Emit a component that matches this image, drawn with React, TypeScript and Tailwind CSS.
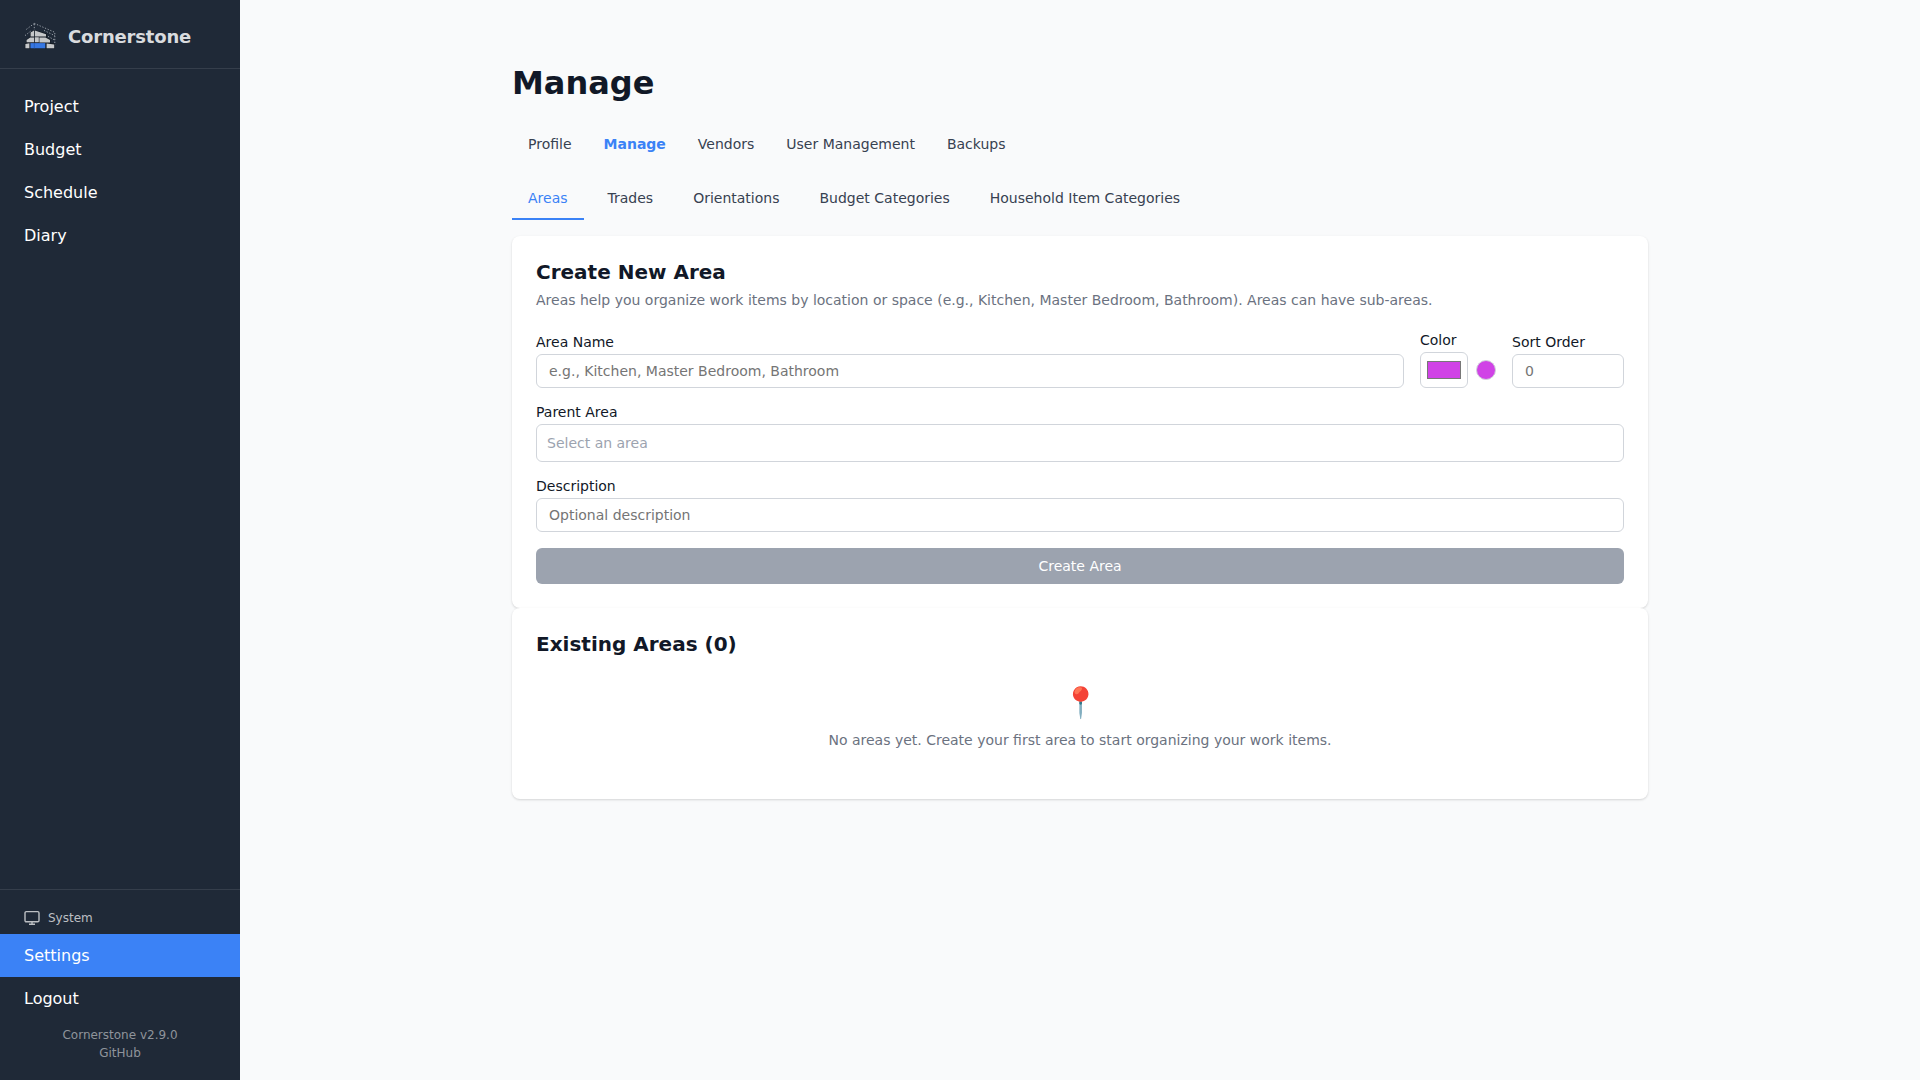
import clsx from "clsx";

const NAV_ITEMS = ["Project", "Budget", "Schedule", "Diary"];

const MAIN_TABS = ["Profile", "Manage", "Vendors", "User Management", "Backups"];

const SUB_TABS = [
  "Areas",
  "Trades",
  "Orientations",
  "Budget Categories",
  "Household Item Categories",
];

const inputClass =
  "block h-[34px] w-full rounded-md border border-[#d1d5db] bg-white px-3 text-sm leading-[normal] text-[#111827] placeholder:text-[#757575]";

const labelClass = "block text-sm leading-4 text-[#111827]";

function Logo() {
  return (
    <svg viewBox="0 0 32 32" className="size-8 shrink-0" fill="none">
      <g stroke="#a3a9b2" strokeWidth="0.9" strokeDasharray="1.3 1.6">
        <path d="M10.3 3.4 1 10.4M10.3 3.4 31 12.4M1 15.6l5.6-4.4M20 10.4l11 5.4M24 16.4l7 3.8" />
        <path d="M10.3 4v6.4M30.8 13v12" />
      </g>
      <path
        d="M6 12.4 10.3 10l12.5 3.6v3.6l3.8 2.2v3.4l4.2.6v5.4H.8v-5.2l1.4-.8v-2.8L6 16.6z"
        fill="#141b24"
      />
      <g fill="#c6c8ca">
        <path d="M6.6 12.6 10 10.6v5.9H6.6zM10.8 10.6 22 14.2v2.3H10.8z" />
        <path d="M2.6 20 6.2 17.4H10v4.8H2.6zM10.8 17.2h4v5h-4zM15.4 17.4h6l4.6 2.6v2.4H15.4z" />
        <path d="M1.4 24l4-.8v5h-4zM22.6 23.4l7.6 1v3.8h-7.6z" />
      </g>
      <path d="M6.4 23.1h14.9v5.2H6.4z" fill="#3677e2" />
      <path d="M10.3 22.8v5.6" stroke="#2455a8" strokeWidth="0.7" />
    </svg>
  );
}

function MonitorIcon() {
  return (
    <svg viewBox="0 0 16 16" className="size-4" fill="none" stroke="currentColor" strokeWidth="1.4">
      <rect x="1" y="1.6" width="14" height="10.2" rx="1.3" />
      <path d="M8 11.8v2.4M5 14.2h6" />
    </svg>
  );
}

function Sidebar() {
  return (
    <aside className="flex w-60 shrink-0 flex-col bg-[#1f2937] text-white">
      <div className="flex h-[69px] items-center gap-3 border-b border-white/10 px-6 pt-1">
        <Logo />
        <span className="pt-0.5 text-lg leading-6 font-bold tracking-[-0.01em] text-[#d9dbde]">
          Cornerstone
        </span>
      </div>
      <nav className="flex-1 pt-4">
        {NAV_ITEMS.map((item) => (
          <a key={item} className="block px-6 py-3 leading-[19px]">
            {item}
          </a>
        ))}
      </nav>
      <div className="border-t border-white/10">
        <div className="flex h-11 items-center gap-2 px-6 pt-3 text-xs text-[#bcbfc3]">
          <MonitorIcon />
          System
        </div>
        <a className="block bg-[#3b82f6] px-6 py-3 leading-[19px]">Settings</a>
        <a className="block px-6 py-3 leading-[19px]">Logout</a>
        <div className="h-[60px] pt-1.5 text-center text-xs leading-[18px] text-[#8f949b]">
          <div>Cornerstone v2.9.0</div>
          <div>GitHub</div>
        </div>
      </div>
    </aside>
  );
}

function CreateAreaCard() {
  return (
    <section className="rounded-lg bg-white p-6 shadow-[0_1px_3px_rgba(0,0,0,0.1),0_1px_2px_rgba(0,0,0,0.06)]">
      <h2 className="text-xl leading-6 font-bold">Create New Area</h2>
      <p className="mt-1.5 text-sm leading-[21px] text-[#6b7280]">
        Areas help you organize work items by location or space (e.g., Kitchen, Master Bedroom,
        Bathroom). Areas can have sub-areas.
      </p>
      <div className="mt-[21px] flex items-end gap-4">
        <div className="flex-1">
          <label className={labelClass}>Area Name</label>
          <input
            className={clsx(inputClass, "mt-1")}
            placeholder="e.g., Kitchen, Master Bedroom, Bathroom"
          />
        </div>
        <div>
          <label className={labelClass}>Color</label>
          <div className="mt-1 flex items-center gap-2">
            <input
              type="color"
              defaultValue="#d043e6"
              className="block h-9 w-12 rounded-md border border-[#d1d5db] bg-white p-1"
            />
            <span className="size-5 rounded-full border border-[#d1d5db] bg-[#d043e6]" />
          </div>
        </div>
        <div className="w-28">
          <label className={labelClass}>Sort Order</label>
          <input className={clsx(inputClass, "mt-1")} placeholder="0" />
        </div>
      </div>
      <div className="mt-4">
        <label className={labelClass}>Parent Area</label>
        <div className="mt-1 flex h-[38px] items-center rounded-md border border-[#d1d5db] px-2.5 text-sm text-[#9ca3af]">
          Select an area
        </div>
      </div>
      <div className="mt-4">
        <label className={labelClass}>Description</label>
        <input className={clsx(inputClass, "mt-1")} placeholder="Optional description" />
      </div>
      <button className="mt-4 block h-9 w-full rounded-md bg-[#9ca3af] text-sm text-white">
        Create Area
      </button>
    </section>
  );
}

function ExistingAreasCard() {
  return (
    <section className="h-[191px] rounded-lg bg-white p-6 shadow-[0_1px_3px_rgba(0,0,0,0.1),0_1px_2px_rgba(0,0,0,0.06)]">
      <h2 className="text-xl leading-6 font-bold">Existing Areas (0)</h2>
      <div className="mt-7 text-center">
        <div className="text-3xl leading-[38px]">📍</div>
        <p className="mt-2 text-sm leading-[21px] text-[#6b7280]">
          No areas yet. Create your first area to start organizing your work items.
        </p>
      </div>
    </section>
  );
}

export default function App() {
  return (
    <div className="flex h-screen overflow-hidden bg-[#f9fafb] font-['DejaVu_Sans',sans-serif] text-[#111827]">
      <Sidebar />
      <main className="flex-1">
        <div className="mx-auto w-[1136px] pt-16">
          <h1 className="text-[32px] leading-[38px] font-bold">Manage</h1>
          <div className="mt-[22px] flex text-sm">
            {MAIN_TABS.map((tab) => (
              <a
                key={tab}
                className={clsx(
                  "px-4 py-2.5 leading-5",
                  tab === "Manage" ? "font-bold text-[#3b82f6]" : "text-[#374151]",
                )}
              >
                {tab}
              </a>
            ))}
          </div>
          <div className="mt-4 flex gap-2 text-sm">
            {SUB_TABS.map((tab) => (
              <a
                key={tab}
                className={clsx(
                  "border-b-2 px-4 pt-2 pb-2.5 leading-5",
                  tab === "Areas"
                    ? "border-[#3b82f6] text-[#3b82f6]"
                    : "border-transparent text-[#374151]",
                )}
              >
                {tab}
              </a>
            ))}
          </div>
          <div className="mt-4">
            <CreateAreaCard />
            <ExistingAreasCard />
          </div>
        </div>
      </main>
    </div>
  );
}
